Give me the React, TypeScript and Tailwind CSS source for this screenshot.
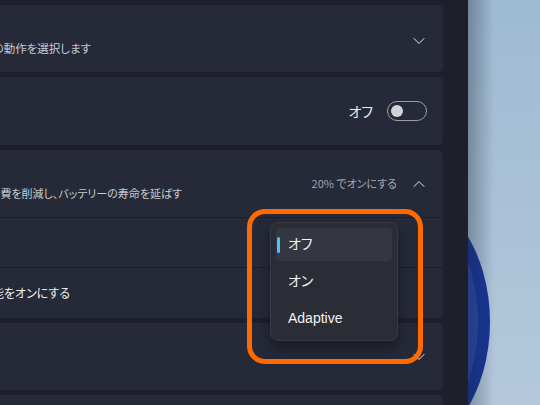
import { ChevronDown, ChevronUp } from 'lucide-react'

const jp = "font-['Noto_Sans_CJK_JP',sans-serif] [font-feature-settings:'palt']"

function Toggle() {
  return (
    <div className="flex items-center w-[40px] h-[20px] rounded-full border border-[#9c9ea6] pl-[3px]">
      <div className="w-[12px] h-[12px] rounded-full bg-[#d2d3d6]" />
    </div>
  )
}

export default function App() {
  return (
    <div className={`flex w-[540px] h-[405px] overflow-hidden ${jp}`}>
      {/* settings window, left part is scrolled out of view */}
      <div className="relative w-[468px] h-[405px] overflow-hidden bg-[#1d202b]">
        <div className="flex flex-col gap-[5px] pt-[5px] w-[443px]">
          <div className="flex items-end justify-between h-[67px] rounded-r-[5px] bg-[#262a38] pb-[16px] pr-[14px]">
            <div className="flex justify-end w-[91px]">
              <span className="shrink-0 whitespace-nowrap text-[11.5px] leading-[16px] text-[#c9cacf]">
                電源ボタンを押したときの動作を選択します
              </span>
            </div>
            <ChevronDown size={20} strokeWidth={1.2} className="text-[#e8e8ea] mb-[5px]" />
          </div>

          <div className="flex items-center justify-end h-[68px] rounded-r-[5px] bg-[#262a38] pr-[16px] gap-[14px]">
            <span className="text-[14px] text-[#f0f0f2]">オフ</span>
            <Toggle />
          </div>

          <div className="flex flex-col rounded-r-[5px] bg-[#262a38]">
            <div className="flex items-center justify-between h-[67px] pr-[14px]">
              <div className="flex justify-end w-[182px] pt-[19px]">
                <span className="shrink-0 whitespace-nowrap text-[11px] leading-[16px] text-[#c9cacf]">
                  一部の通知とバックグラウンド アクティビティを制限して電力消費を削減し、バッテリーの寿命を延ばす
                </span>
              </div>
              <div className="flex items-center gap-[12px]">
                <span className="text-[11px] text-[#a3a5ac]">20% でオンにする</span>
                <ChevronUp size={20} strokeWidth={1.2} className="text-[#e8e8ea]" />
              </div>
            </div>
            <div className="h-[50px] border-t border-[#1c1f2a]" />
            <div className="flex items-center h-[51px] border-t border-[#1c1f2a]">
              <div className="flex justify-end w-[70px]">
                <span className="shrink-0 whitespace-nowrap text-[12px] text-[#eeeef0]">
                  バッテリー節約機能をオンにする
                </span>
              </div>
            </div>
          </div>

          <div className="flex items-center justify-end h-[67px] rounded-r-[5px] bg-[#262a38] pr-[14px]">
            <ChevronDown size={20} strokeWidth={1.2} className="text-[#e8e8ea]" />
          </div>

          <div className="h-[40px] rounded-r-[5px] bg-[#262a38]" />
        </div>

        {/* dropdown menu */}
        <div className="absolute left-[270px] top-[222px] w-[128px] flex flex-col gap-[4px] p-[5px] rounded-[8px] border border-[#363842] bg-[#2b2d36] shadow-[0_8px_16px_rgba(0,0,0,0.35)] font-['Liberation_Sans','Noto_Sans_CJK_JP',sans-serif] text-[14px] text-[#f2f2f4]">
          <div className="relative flex items-center h-[33px] pl-[12px] rounded-[4px] bg-[#343742]">
            <div className="absolute left-[1px] top-[9px] w-[3px] h-[16px] rounded-full bg-[#4cc2ff]" />
            オフ
          </div>
          <div className="flex items-center h-[33px] pl-[12px]">オン</div>
          <div className="flex items-center h-[33px] pl-[12px]">Adaptive</div>
        </div>

        {/* orange highlight annotation */}
        <div className="absolute left-[247px] top-[209px] w-[176px] h-[155px] rounded-[18px] border-[5px] border-[#ff6a00]" />
      </div>

      {/* desktop wallpaper */}
      <svg width="72" height="405" viewBox="0 0 72 405">
        <defs>
          <linearGradient id="wp" x1="0" y1="0" x2="0" y2="1">
            <stop offset="0" stopColor="#9ebad3" />
            <stop offset="1" stopColor="#b3c8db" />
          </linearGradient>
          <linearGradient id="sh" x1="0" y1="0" x2="1" y2="0">
            <stop offset="0" stopColor="#1d2535" stopOpacity="0.35" />
            <stop offset="1" stopColor="#1d2535" stopOpacity="0" />
          </linearGradient>
        </defs>
        <rect width="72" height="405" fill="url(#wp)" />
        <ellipse cx="-68" cy="322" rx="90" ry="130" fill="#17359a" />
        <ellipse cx="-72" cy="322" rx="82" ry="124" fill="#2749ab" />
        <rect width="26" height="405" fill="url(#sh)" />
      </svg>
    </div>
  )
}
